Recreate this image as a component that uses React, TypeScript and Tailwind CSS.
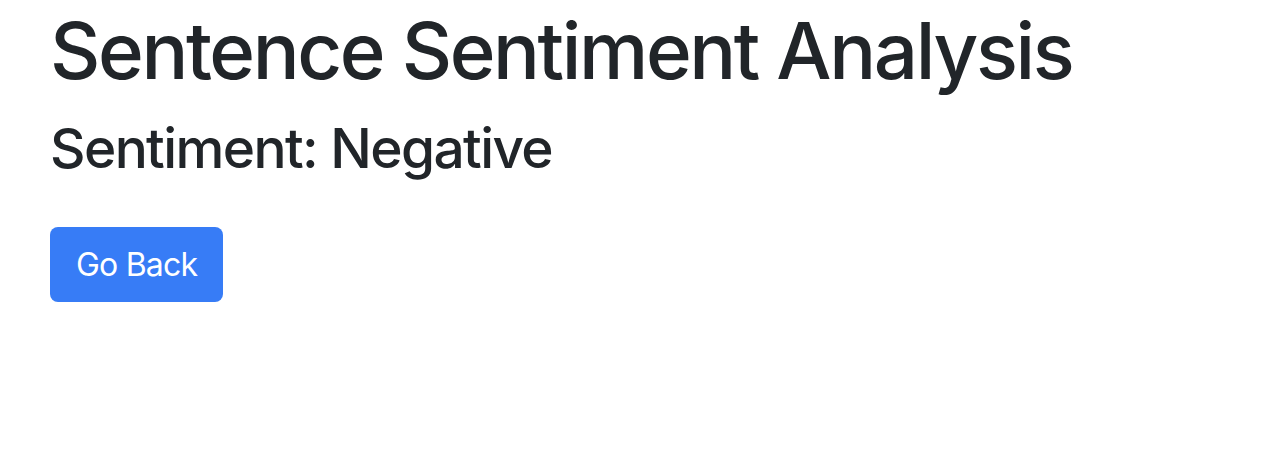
export default function App() {
  return (
    <div className="min-h-[450px] bg-white px-[50px] pt-[3px] font-['Inter','Liberation_Sans',sans-serif] text-[#212529]">
      <h1 className="mb-4 text-[78px] leading-[96px] font-medium tracking-[-2.4px]">Sentence Sentiment Analysis</h1>
      <h3 className="mb-4 text-[55px] leading-[67px] font-medium tracking-[-1.6px]">Sentiment: Negative</h3>
      <div className="pt-[29px]">
        <button className="h-[75px] rounded-[8px] bg-[#377cf6] px-[26px] text-[32px] leading-[48px] tracking-[-0.8px] text-white">
          Go Back
        </button>
      </div>
    </div>
  );
}
